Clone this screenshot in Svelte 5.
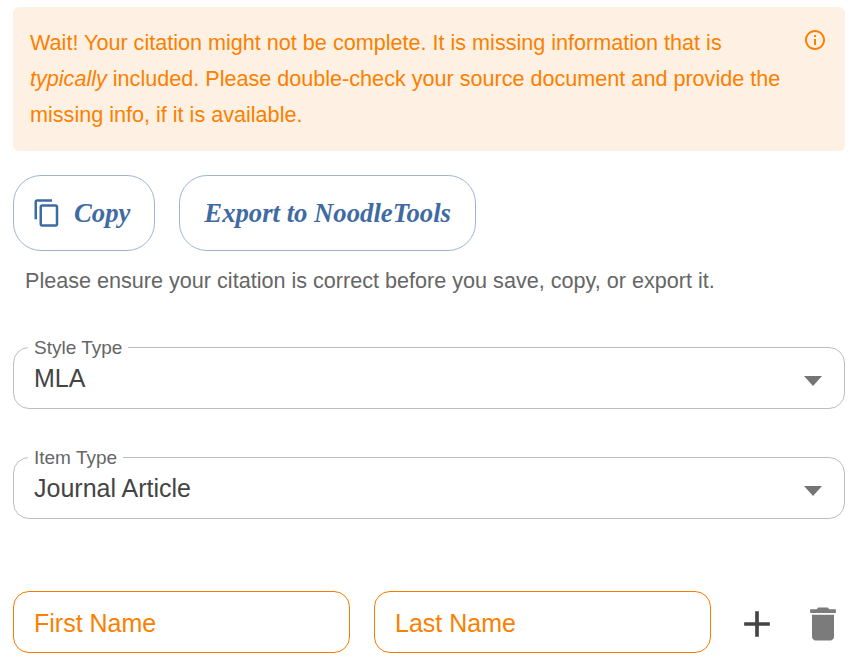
<script>
  let selects = [
    { label: "Style Type", value: "MLA" },
    { label: "Item Type", value: "Journal Article" },
  ];
</script>

<div class="page">
  <div class="alert">
    <p>
      Wait! Your citation might not be complete. It is missing information that is
      <em>typically</em> included. Please double-check your source document and provide the
      missing info, if it is available.
    </p>
    <svg class="info" viewBox="0 0 24 24" width="24" height="24" fill="#fb8000">
      <path d="M11 7h2v2h-2zm0 4h2v6h-2zm1-9C6.48 2 2 6.48 2 12s4.48 10 10 10 10-4.48 10-10S17.52 2 12 2zm0 18c-4.41 0-8-3.59-8-8s3.59-8 8-8 8 3.59 8 8-3.59 8-8 8z" />
    </svg>
  </div>

  <div class="actions">
    <button class="btn copy">
      <svg viewBox="0 0 24 24" width="30" height="30" fill="#3f6ba3">
        <path d="M16 1H4c-1.1 0-2 .9-2 2v14h2V3h12V1zm3 4H8c-1.1 0-2 .9-2 2v14c0 1.1.9 2 2 2h11c1.1 0 2-.9 2-2V7c0-1.1-.9-2-2-2zm0 16H8V7h11v14z" />
      </svg>
      Copy
    </button>
    <button class="btn">Export to NoodleTools</button>
  </div>

  <p class="hint">Please ensure your citation is correct before you save, copy, or export it.</p>

  {#each selects as sel}
    <fieldset class="select">
      <legend>{sel.label}</legend>
      <span class="value">{sel.value}</span>
      <span class="arrow"></span>
    </fieldset>
  {/each}

  <div class="names">
    <div class="name">First Name</div>
    <div class="name">Last Name</div>
    <svg class="add" viewBox="0 0 24 24" width="44" height="44" fill="#444">
      <path d="M19 13h-6v6h-2v-6H5v-2h6V5h2v6h6v2z" />
    </svg>
    <svg class="trash" viewBox="0 0 24 24" width="44" height="44" fill="#7b7b7b">
      <path d="M6 19c0 1.1.9 2 2 2h8c1.1 0 2-.9 2-2V7H6v12zM19 4h-3.5l-1-1h-5l-1 1H5v2h14V4z" />
    </svg>
  </div>
</div>

<style>
  :global(body) {
    background: #fff;
    font-family: "Liberation Sans", Arial, sans-serif;
  }

  .page {
    padding: 7px 13px 0;
    height: 664px;
    overflow: hidden;
  }

  .alert {
    display: flex;
    justify-content: space-between;
    background: #fef1e4;
    border-radius: 6px;
    padding: 18px 18px 18px 17px;
    color: #fb8000;
    font-size: 21.6px;
    line-height: 36px;
  }

  .alert p {
    margin: 0;
    width: 760px;
  }

  .info {
    flex: none;
    margin-top: 3px;
  }

  .actions {
    display: flex;
    gap: 24px;
    margin-top: 24px;
  }

  .btn {
    display: flex;
    align-items: center;
    gap: 12px;
    height: 76px;
    padding: 0 24px;
    background: #fff;
    border: 1px solid #9db5d1;
    border-radius: 28px;
    color: #3f6ba3;
    font-family: "Liberation Serif", serif;
    font-style: italic;
    font-weight: 700;
    font-size: 26.7px;
  }

  .copy {
    padding: 0 24px 0 18px;
  }

  .hint {
    margin: 17px 0 0 12px;
    color: #666;
    font-size: 21.6px;
    line-height: 26px;
  }

  .select {
    position: relative;
    display: flex;
    align-items: center;
    height: 73px;
    box-sizing: border-box;
    margin: 0 0 37px;
    padding: 0 20px;
    border: 1px solid #bdbdbd;
    border-radius: 16px;
  }

  .select:first-of-type {
    margin-top: 42px;
  }

  legend {
    margin-left: -6px;
    padding: 2px 6px 0 6px;
    color: #666;
    font-size: 19px;
    line-height: 20px;
  }

  .value {
    color: #444;
    font-size: 25px;
    margin-top: -10px;
  }

  .arrow {
    position: absolute;
    right: 22px;
    top: 18px;
    border-left: 9.5px solid transparent;
    border-right: 9.5px solid transparent;
    border-top: 10px solid #757575;
  }

  .names {
    display: flex;
    align-items: center;
    gap: 24px;
    margin-top: 72px;
  }

  .name {
    flex: none;
    width: 337px;
    height: 62px;
    box-sizing: border-box;
    display: flex;
    align-items: center;
    padding: 2px 20px 0;
    border: 1px solid #f57c00;
    border-radius: 16px;
    color: #fb8000;
    font-size: 25px;
  }

  .add,
  .trash {
    flex: none;
    margin-top: 4px;
  }

  .trash {
    margin-left: -2px;
  }
</style>
